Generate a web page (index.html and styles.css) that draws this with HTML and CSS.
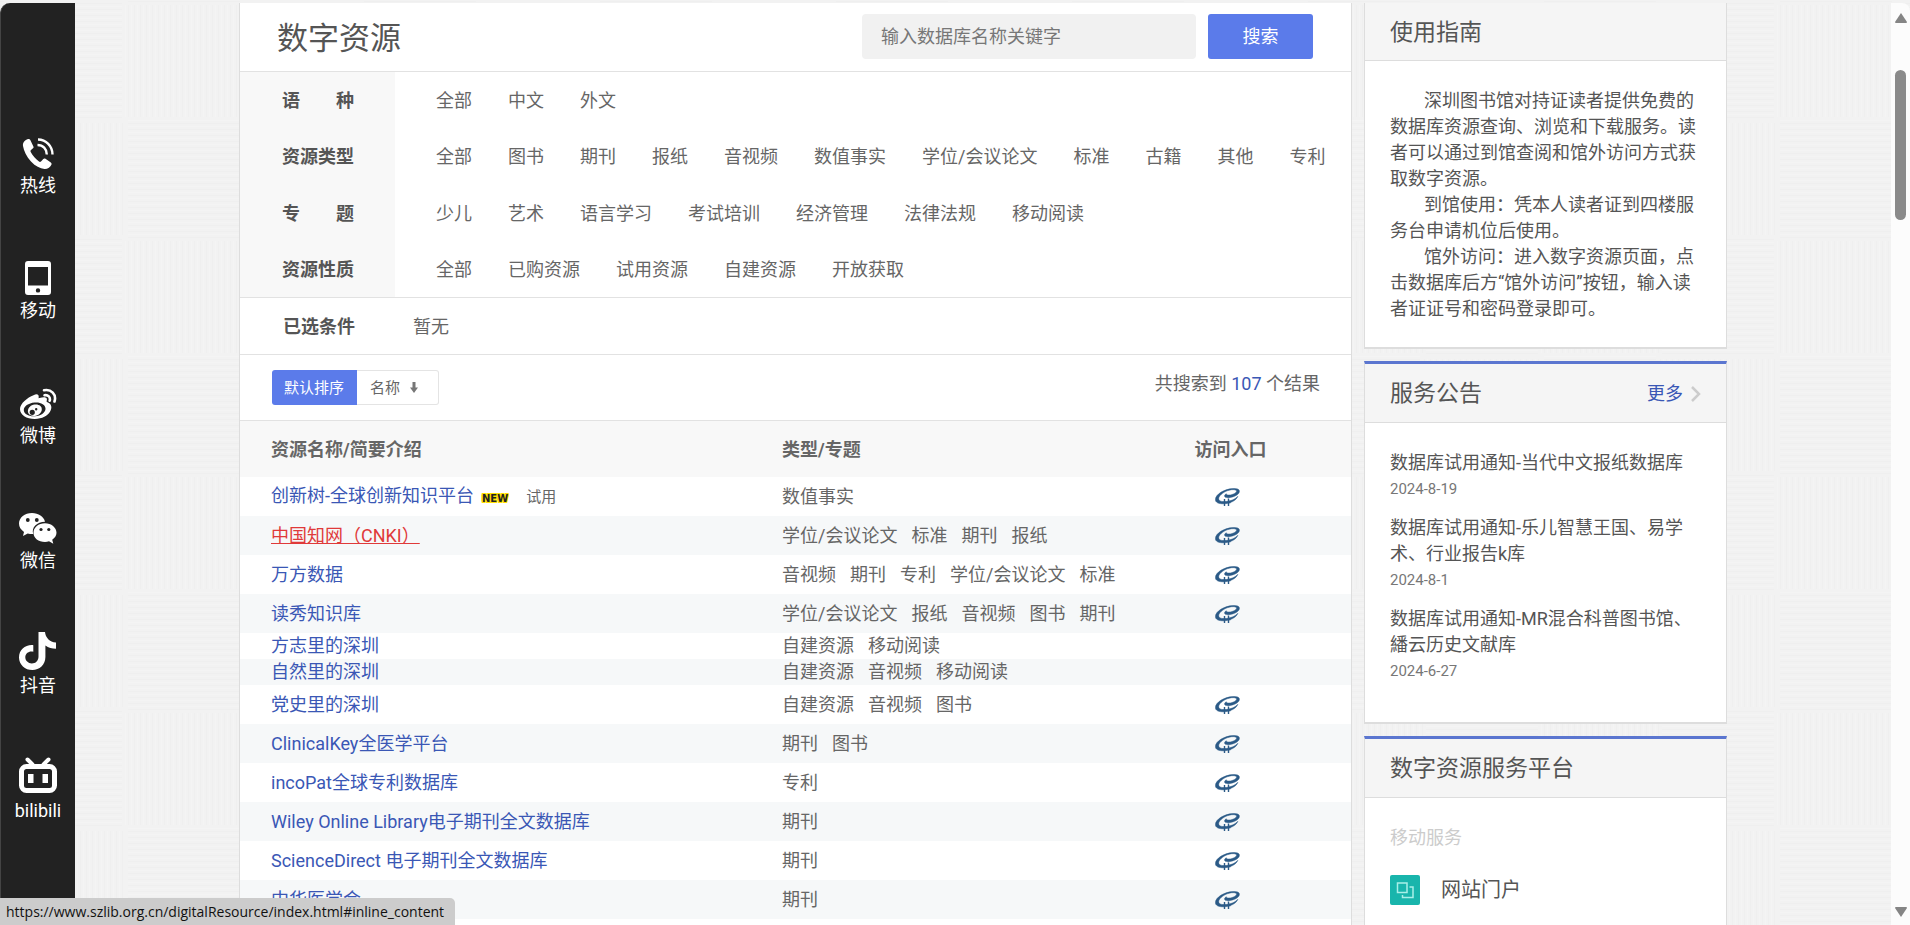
FILE: index.html
```html
<!DOCTYPE html>
<html lang="zh-CN">
<head>
<meta charset="utf-8">
<title>数字资源</title>
<link rel="stylesheet" href="styles.css">
</head>
<body>
<svg class="sprite" aria-hidden="true">
  <symbol id="visit" viewBox="0 0 25 18">
    <path fill="#2b5a87" stroke="#2b5a87" stroke-width=".5" d="M24.400 3.400C24.600 1.200 21.800.4 17.500.6 10 1 .4 6 .4 11.600c0 3 3.400 4.300 8.200 4.200C15 15.600 21.500 12.500 22.800 8.300 20.500 11.300 15 13.400 9.700 13.600c-3.600.1-6-.8-6-2.900C3.700 7 10.600 2.200 16.800 1.700c3-.2 5 .3 4.800 1.500-.2 1.500-3.100 3.200-6.100 3.700-2.500.4-4.300-.1-4.200-1.100-1.700.9-2.100 2.100-1.500 2.900.9 1.200 4.400 1.200 7.800.2 3.500-1.100 6.600-3 6.800-5.500z"/>
    <path fill="none" stroke="#2b5a87" stroke-width="1.400" d="M9.500 11v7M13.500 10.500v7.500M7.500 14.500h8"/>
  </symbol>
</svg>

<nav class="contact" aria-label="联系方式">
  <a class="contact-item" href="#hotline">
    <svg width="32" height="32" viewBox="0 0 32 32" fill="none" stroke="#fff"><path fill="#fff" stroke="none" d="M6 1C3 2 .5 4.500 1 8c.8 5 3.500 10.500 8 15.500 4.500 4.800 9 7 13.500 7.500 3 .2 6-2 7-4.500.3-.8 0-1.600-.7-2.100l-5.300-3.600c-.8-.5-1.600-.4-2.200.2L19 23.500c-.6.6-1.300.6-2 .1-3.200-2.400-6.300-6.100-8.300-9.600-.4-.8-.3-1.400.3-1.900l2-1.800c.6-.5.700-1.200.4-1.900L8.300 1.900C7.900 1 7 .7 6 1z"/><path stroke-width="2.400" d="M16 1.500C24 1.500 30.500 8 30.500 16.500M15.500 7c5.500 0 9.300 4 9.300 9.500"/></svg>
    <span>热线</span>
  </a>
  <a class="contact-item" href="#mobile">
    <svg width="26" height="34" viewBox="0 0 26 34"><path fill="#fff" fill-rule="evenodd" d="M3 0h20a3 3 0 0 1 3 3v28a3 3 0 0 1-3 3H3a3 3 0 0 1-3-3V3a3 3 0 0 1 3-3zm0 6v18.500h20V6zM13 27.200a2.200 2.200 0 1 0 0 4.400 2.200 2.200 0 0 0 0-4.400z"/></svg>
    <span>移动</span>
  </a>
  <a class="contact-item" href="#weibo">
    <svg width="37" height="32" viewBox="0 0 37 32"><path fill="#fff" fill-rule="evenodd" d="M13.500 7.200c3-1.700 5.500-1.200 5.200 1.800-.1.900-.2 1.500.8 1.100 4.200-1.700 8.500-1.400 7.200 2.700-.3.900 0 1.200.8 1.500 8.500 3 2.500 16.700-12.700 16.700C6.500 31 0 27 0 21c0-5.500 7.500-11.500 13.500-13.800zM14.500 14.500C8.500 15 3.600 18.400 3.800 22.300c.2 3.900 5.200 6.500 11.200 6 6-.6 10.700-4 10.500-7.900-.2-4-5.100-6.500-11-5.900zm0 2c4.300-.6 7.700 1.600 7.300 5.200-.3 3.200-3.500 5.800-7.200 6.200-4 .3-7-1.800-6.700-5.100.3-3.200 3-5.800 6.600-6.300zM12.200 21.700a2.600 2.600 0 1 0 .1 5.200 2.600 2.600 0 0 0-.1-5.200zm4-1.700a1.200 1.200 0 1 0 0 2.400 1.200 1.200 0 0 0 0-2.400z"/><path fill="none" stroke="#fff" stroke-width="2.600" stroke-linecap="round" d="M24 2.300c7-1.600 12.800 4.200 10.500 11.200M24.500 7.300c3.500-.7 6.200 1.900 5.200 5.400"/></svg>
    <span>微博</span>
  </a>
  <a class="contact-item" href="#wechat">
    <svg width="38" height="32" viewBox="0 0 38 32"><path fill="#fff" d="M13 0C5.800 0 0 4.600 0 10.600c0 3.400 1.800 6.200 5 8.300L4 23l4.700-2.500c1.500.4 3 .6 4.600.6l1 0C12 14.500 18 8.800 26 8.700 24.800 3.600 19.500 0 13 0z"/><path fill="#fff" d="M26 10.200c-6.500 0-11.500 4.200-11.500 9.500S19.500 29 26 29c1.400 0 2.700-.3 4-.7l4.300 2.400-1.100-3.900c2.500-1.800 4.300-4.300 4.300-7.100 0-5.300-5.300-9.500-11.500-9.500z"/><g fill="#222"><circle cx="8.800" cy="7" r="1.900"/><circle cx="17.800" cy="7" r="1.900"/><circle cx="22" cy="16.500" r="1.600"/><circle cx="29.800" cy="16.500" r="1.600"/></g></svg>
    <span>微信</span>
  </a>
  <a class="contact-item" href="#douyin">
    <svg width="38" height="38" viewBox="0 0 38 38"><path fill="#fff" d="M19.500 0h6.500c.5 5.500 4.500 10 11 10.600v6.200c-4 0-7.600-1-10.600-3.200V25C26.400 32.800 20.500 38 13.400 38 6 38 0 32.500 0 25.400c0-7.600 6.500-13 14.300-12.200v6.600c-4.300-1-8 1.600-8 5.500 0 3.500 2.900 6.100 6.500 6.100 4 0 6.700-2.800 6.700-7z"/></svg>
    <span>抖音</span>
  </a>
  <a class="contact-item" href="#bilibili">
    <svg width="38" height="38" viewBox="0 0 38 38"><g fill="none" stroke="#fff" stroke-width="5"><rect x="2.500" y="9.500" width="33" height="24" rx="5"/><path stroke-width="4" stroke-linecap="round" d="M8.500 2.500l5 5M29.500 2.500l-5 5"/></g><path fill="#fff" d="M9 17h5.500v9H9zM23.500 17H29v9h-5.500z"/></svg>
    <span>bilibili</span>
  </a>
</nav>

<div class="page">
  <main class="resources">
    <header class="resources-head">
      <h1>数字资源</h1>
      <form class="search">
        <input type="search" placeholder="输入数据库名称关键字" aria-label="输入数据库名称关键字">
        <button type="button">搜索</button>
      </form>
    </header>

    <dl class="filters">
      <div class="filter"><dt>语　　种</dt><dd><a href="#">全部</a><a href="#">中文</a><a href="#">外文</a></dd></div>
      <div class="filter"><dt>资源类型</dt><dd><a href="#">全部</a><a href="#">图书</a><a href="#">期刊</a><a href="#">报纸</a><a href="#">音视频</a><a href="#">数值事实</a><a href="#">学位/会议论文</a><a href="#">标准</a><a href="#">古籍</a><a href="#">其他</a><a href="#">专利</a></dd></div>
      <div class="filter"><dt>专　　题</dt><dd><a href="#">少儿</a><a href="#">艺术</a><a href="#">语言学习</a><a href="#">考试培训</a><a href="#">经济管理</a><a href="#">法律法规</a><a href="#">移动阅读</a></dd></div>
      <div class="filter"><dt>资源性质</dt><dd><a href="#">全部</a><a href="#">已购资源</a><a href="#">试用资源</a><a href="#">自建资源</a><a href="#">开放获取</a></dd></div>
    </dl>

    <div class="selected"><strong>已选条件</strong><span>暂无</span></div>

    <div class="toolbar">
      <div class="sort">
        <button class="sort-button active" type="button">默认排序</button>
        <button class="sort-button" type="button">名称
          <svg width="8" height="11" viewBox="0 0 8 11" fill="#777"><path d="M2.500 0h3v5.500H8L4 11 0 5.500h2.500z"/></svg>
        </button>
      </div>
      <p class="count">共搜索到 <b>107</b> 个结果</p>
    </div>

    <table class="list">
      <thead>
        <tr><th class="col-name">资源名称/简要介绍</th><th class="col-type">类型/专题</th><th class="col-visit">访问入口</th></tr>
      </thead>
      <tbody>
        <tr><td><a href="#">创新树-全球创新知识平台</a><em class="new">NEW</em><small>试用</small></td><td><span>数值事实</span></td><td><a href="#" aria-label="访问"><svg class="visit"><use href="#visit"/></svg></a></td></tr>
        <tr><td><a class="hovered" href="#">中国知网（CNKI）</a></td><td><span>学位/会议论文</span><span>标准</span><span>期刊</span><span>报纸</span></td><td><a href="#" aria-label="访问"><svg class="visit"><use href="#visit"/></svg></a></td></tr>
        <tr><td><a href="#">万方数据</a></td><td><span>音视频</span><span>期刊</span><span>专利</span><span>学位/会议论文</span><span>标准</span></td><td><a href="#" aria-label="访问"><svg class="visit"><use href="#visit"/></svg></a></td></tr>
        <tr><td><a href="#">读秀知识库</a></td><td><span>学位/会议论文</span><span>报纸</span><span>音视频</span><span>图书</span><span>期刊</span></td><td><a href="#" aria-label="访问"><svg class="visit"><use href="#visit"/></svg></a></td></tr>
        <tr class="compact"><td><a href="#">方志里的深圳</a></td><td><span>自建资源</span><span>移动阅读</span></td><td></td></tr>
        <tr class="compact"><td><a href="#">自然里的深圳</a></td><td><span>自建资源</span><span>音视频</span><span>移动阅读</span></td><td></td></tr>
        <tr><td><a href="#">党史里的深圳</a></td><td><span>自建资源</span><span>音视频</span><span>图书</span></td><td><a href="#" aria-label="访问"><svg class="visit"><use href="#visit"/></svg></a></td></tr>
        <tr><td><a href="#">ClinicalKey全医学平台</a></td><td><span>期刊</span><span>图书</span></td><td><a href="#" aria-label="访问"><svg class="visit"><use href="#visit"/></svg></a></td></tr>
        <tr><td><a href="#">incoPat全球专利数据库</a></td><td><span>专利</span></td><td><a href="#" aria-label="访问"><svg class="visit"><use href="#visit"/></svg></a></td></tr>
        <tr><td><a href="#">Wiley Online Library电子期刊全文数据库</a></td><td><span>期刊</span></td><td><a href="#" aria-label="访问"><svg class="visit"><use href="#visit"/></svg></a></td></tr>
        <tr><td><a href="#">ScienceDirect 电子期刊全文数据库</a></td><td><span>期刊</span></td><td><a href="#" aria-label="访问"><svg class="visit"><use href="#visit"/></svg></a></td></tr>
        <tr><td><a href="#">中华医学会</a></td><td><span>期刊</span></td><td><a href="#" aria-label="访问"><svg class="visit"><use href="#visit"/></svg></a></td></tr>
      </tbody>
    </table>
  </main>

  <aside class="side">
    <section class="card first">
      <header><h2>使用指南</h2></header>
      <div class="card-body guide">
        <p>深圳图书馆对持证读者提供免费的数据库资源查询、浏览和下载服务。读者可以通过到馆查阅和馆外访问方式获取数字资源。</p>
        <p>到馆使用：凭本人读者证到四楼服务台申请机位后使用。</p>
        <p>馆外访问：进入数字资源页面，点击数据库后方“馆外访问”按钮，输入读者证证号和密码登录即可。</p>
      </div>
    </section>
    <section class="card">
      <header><h2>服务公告</h2><a class="more" href="#">更多<svg width="10" height="16" viewBox="0 0 10 16" fill="none" stroke="#ccc" stroke-width="2.500"><path d="M1 1l7 7-7 7"/></svg></a></header>
      <ul class="card-body notices">
        <li><a href="#">数据库试用通知-当代中文报纸数据库</a><time>2024-8-19</time></li>
        <li><a href="#">数据库试用通知-乐儿智慧王国、易学术、行业报告k库</a><time>2024-8-1</time></li>
        <li><a href="#">数据库试用通知-MR混合科普图书馆、繙云历史文献库</a><time>2024-6-27</time></li>
      </ul>
    </section>
    <section class="card">
      <header><h2>数字资源服务平台</h2></header>
      <div class="card-body platform">
        <h3>移动服务</h3>
        <a class="portal" href="#"><svg width="30" height="30" viewBox="0 0 30 30" fill="none"><rect width="30" height="30" rx="2" fill="#19b5ac"/><g stroke="#a9efe8" stroke-width="1.500"><rect x="7.500" y="8" width="9.500" height="9.500"/><path d="M19.500 12H23v10.500H12.500V20"/></g></svg>网站门户</a>
      </div>
    </section>
  </aside>
</div>

<div class="scrollbar" aria-hidden="true">
  <svg width="12" height="10" viewBox="0 0 12 10" fill="#858585"><path d="M6 0l6 9q0 1-1 1H1Q0 10 0 9z"/></svg>
  <div class="thumb"></div>
  <svg width="12" height="10" viewBox="0 0 12 10" fill="#858585"><path d="M6 10l6-9q0-1-1-1H1Q0 0 0 1z"/></svg>
</div>
<div class="status">https://www.szlib.org.cn/digitalResource/index.html#inline_content</div>
</body>
</html>
```

FILE: styles.css
```css
* { box-sizing: border-box; }

html, body { height: 100%; }

body {
  margin: 0;
  padding-top: 3px;
  display: flex;
  overflow: hidden;
  background-color: #f2f2f2;
  background-image: url("data:image/svg+xml,%3Csvg xmlns='http://www.w3.org/2000/svg' width='236' height='236'%3E%3Cdefs%3E%3Cpattern id='h' width='118' height='6' patternUnits='userSpaceOnUse'%3E%3Cpath d='M3 1.500h112' stroke='%23efefef'/%3E%3Cpath d='M3 4.500h112' stroke='%23f4f4f4'/%3E%3C/pattern%3E%3Cpattern id='v' width='6' height='118' patternUnits='userSpaceOnUse'%3E%3Cpath d='M1.500 3v112' stroke='%23efefef'/%3E%3Cpath d='M4.500 3v112' stroke='%23f4f4f4'/%3E%3C/pattern%3E%3C/defs%3E%3Cpath fill='url(%23h)' d='M0 0h118v118H0zM118 118h118v118H118z'/%3E%3Cpath fill='url(%23v)' d='M118 0h118v118H118zM0 118h118v118H0z'/%3E%3C/svg%3E");
  background-position: 7px 2px;
  color: #666;
  font: 18px/26px Roboto, "Noto Sans CJK SC", sans-serif;
}

h1, h2, h3, p, dl, dd, ul { margin: 0; padding: 0; font-weight: 400; }
ul { list-style: none; }
a { color: inherit; text-decoration: none; }
button, input { font: inherit; border: 0; }
.sprite { position: absolute; width: 0; height: 0; }

/* Left contact bar */
.contact {
  flex: 0 0 75px;
  padding-top: 120px;
  background: #222;
  border-left: 1px solid #444;
  border-radius: 10px 0 0 0;
  color: #fff;
}
.contact-item {
  height: 125px;
  display: flex;
  flex-direction: column;
  align-items: center;
}
.contact-item svg { margin-top: auto; }
.contact-item span { margin: 4px 0 50px; line-height: 24px; }

/* Page columns */
.page {
  flex: 1;
  min-width: 0;
  padding: 0 164px;
  display: flex;
  gap: 12px;
  overflow: hidden;
}
.resources {
  flex: 1;
  min-width: 0;
  background: #fff;
  border: 1px solid #ddd;
  border-width: 0 1px;
}
.side { flex: 0 0 363px; }

.resources-head {
  height: 69px;
  padding: 0 38px 2px 37px;
  display: flex;
  align-items: center;
  justify-content: space-between;
  border-bottom: 1px solid #e2e2e2;
}
.resources-head h1 { padding-top: 6px; font-size: 31px; line-height: 40px; color: #555; }
.search { display: flex; gap: 12px; }
.search input {
  width: 334px;
  height: 45px;
  padding: 0 19px;
  background: #f1f1f1;
  border-radius: 4px;
}
.search input::placeholder { color: #777; opacity: 1; }
.search button {
  width: 105px;
  height: 45px;
  padding: 2px 0 0;
  border-radius: 3px;
  background: #5b7bea;
  color: #fff;
}

.filters {
  min-height: 226px;
  display: grid;
  grid-auto-rows: 1fr;
  border-bottom: 1px solid #e2e2e2;
}
.filter { display: flex; }
.filter dt {
  flex: 0 0 155px;
  padding: 2px 0 0 42px;
  display: flex;
  align-items: center;
  background: #f8f8f8;
  color: #555;
  font-weight: 700;
}
.filter dd {
  padding: 2px 0 0 41px;
  display: flex;
  align-items: center;
  gap: 36px;
  white-space: nowrap;
}

.selected {
  height: 57px;
  padding: 2px 0 0 43px;
  display: flex;
  align-items: center;
  gap: 58px;
  border-bottom: 1px solid #e2e2e2;
}
.selected strong { color: #555; }

.toolbar {
  height: 66px;
  padding: 0 31px 0 32px;
  display: flex;
  align-items: center;
  justify-content: space-between;
  border-bottom: 1px solid #e2e2e2;
}
.sort { display: flex; }
.sort-button {
  height: 35px;
  padding: 0 20px 0 13px;
  display: flex;
  align-items: center;
  gap: 10px;
  border: 1px solid #e4e4e4;
  border-left: 0;
  border-radius: 0 3px 3px 0;
  background: #fff;
  color: #666;
  font-size: 15px;
}
.sort-button.active {
  padding: 0 13px 0 12px;
  border: 0;
  border-radius: 3px 0 0 3px;
  background: #5b7bea;
  color: #fff;
}
.count { padding-bottom: 8px; }
.count b { color: #3a57b5; font-weight: 400; }

/* Resource table */
.list { width: 100%; border-collapse: collapse; table-layout: fixed; }
.list th { height: 56px; padding: 2px 0 0; background: #f8f8f8; text-align: left; }
.list .col-name { width: 542px; padding-left: 31px; }
.list .col-visit { width: 244px; padding-left: 3px; text-align: center; }
.list td { height: 39px; padding: 0; white-space: nowrap; }
.list td:first-child { padding-left: 31px; color: #3a57b5; }
.list td:last-child { padding-right: 4px; text-align: center; }
.list tbody tr:nth-child(even) { background: #f6f8f9; }
.list .compact td { height: 26px; }
.list td span { margin-right: 14px; }
.list .hovered { color: #e03a3a; text-decoration: underline; }
.visit { width: 25px; height: 18px; display: block; margin: 0 auto; }
.new {
  margin: 0 18px 0 8px;
  color: #222;
  font: 700 10px/12px "DejaVu Sans", sans-serif;
  text-shadow: 1px 0 #ffe000, -1px 0 #ffe000, 0 1px #ffe000, 0 -1px #ffe000, 1px 1px #ffe000, -1px -1px #ffe000, 1px -1px #ffe000, -1px 1px #ffe000;
}
.list small { color: #666; font-size: 15px; }

/* Side cards */
.card {
  margin-bottom: 12px;
  background: #fff;
  border: 1px solid #ddd;
  border-top: 3px solid #5b76d0;
  border-bottom-width: 2px;
  color: #555;
}
.card.first { border-top: 0; }
.card header {
  height: 59px;
  padding: 2px 25px 0;
  display: flex;
  align-items: center;
  justify-content: space-between;
  background: #f5f5f5;
  border-bottom: 1px solid #ddd;
}
.card.first header { height: 58px; }
.card h2 { font-size: 23px; line-height: 32px; }
.more { display: flex; align-items: center; gap: 8px; color: #3a57b5; }
.card-body { padding: 27px 25px 25px; }
.guide { padding-right: 27px; }
.guide p { text-indent: 34px; }
.notices li { margin-bottom: 13px; }
.notices a, .notices time { display: block; }
.notices time { padding-top: 1px; color: #777; font-size: 15px; line-height: 25px; }
.platform h3 { font-size: 18px; color: #ccc; }
.portal { margin-top: 24px; display: flex; align-items: center; gap: 21px; font-size: 20px; }

/* Browser chrome */
.scrollbar {
  flex: 0 0 19px;
  padding: 10px 0 8px;
  display: flex;
  flex-direction: column;
  align-items: center;
  background: #fcfcfc;
  border-radius: 0 8px 0 0;
}
.thumb { width: 11px; height: 150px; margin: 47px 0 auto; border-radius: 6px; background: #8a8a8a; }
.status {
  position: fixed;
  left: 0;
  bottom: 0;
  padding: 0 11px 0 6px;
  border-radius: 0 5px 0 0;
  background: #ccc;
  color: #111;
  font-family: "Open Sans", sans-serif;
  font-size: 14px;
  line-height: 27px;
}
```
